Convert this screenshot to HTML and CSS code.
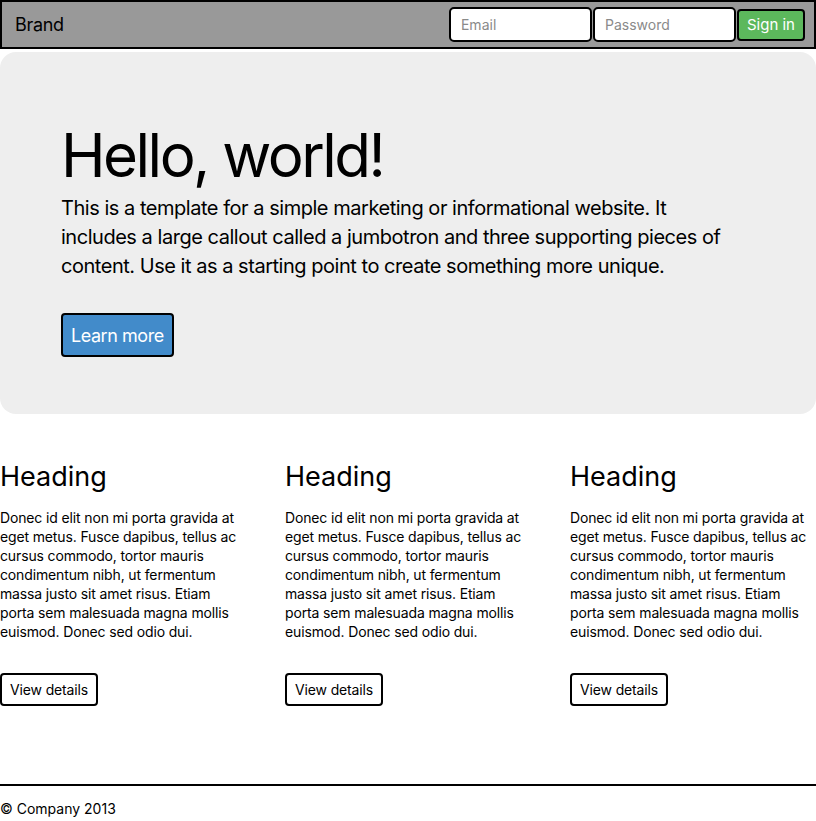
FILE: index.html
```html
<!DOCTYPE html>
<html lang="en">
<head>
<meta charset="utf-8">
<title>Jumbotron</title>
<link rel="stylesheet" href="styles.css">
</head>
<body>
<header class="navbar">
  <a class="brand" href="#">Brand</a>
  <form class="signin">
    <input class="field" type="text" placeholder="Email">
    <input class="field" type="password" placeholder="Password">
    <button class="btn-signin" type="button">Sign in</button>
  </form>
</header>
<section class="jumbotron">
  <h1 class="hero-title">Hello, world!</h1>
  <p class="hero-text">This is a template for a simple marketing or informational website. It includes a large callout called a jumbotron and three supporting pieces of content. Use it as a starting point to create something more unique.</p>
  <button class="btn-primary" type="button">Learn more</button>
</section>
<section class="columns">
  <div class="col">
    <h2 class="col-title">Heading</h2>
    <p class="col-text">Donec id elit non mi porta gravida at eget metus. Fusce dapibus, tellus ac cursus commodo, tortor mauris condimentum nibh, ut fermentum massa justo sit amet risus. Etiam porta sem malesuada magna mollis euismod. Donec sed odio dui.</p>
    <button class="btn-default" type="button">View details</button>
  </div>
  <div class="col">
    <h2 class="col-title">Heading</h2>
    <p class="col-text">Donec id elit non mi porta gravida at eget metus. Fusce dapibus, tellus ac cursus commodo, tortor mauris condimentum nibh, ut fermentum massa justo sit amet risus. Etiam porta sem malesuada magna mollis euismod. Donec sed odio dui.</p>
    <button class="btn-default" type="button">View details</button>
  </div>
  <div class="col">
    <h2 class="col-title">Heading</h2>
    <p class="col-text">Donec id elit non mi porta gravida at eget metus. Fusce dapibus, tellus ac cursus commodo, tortor mauris condimentum nibh, ut fermentum massa justo sit amet risus. Etiam porta sem malesuada magna mollis euismod. Donec sed odio dui.</p>
    <button class="btn-default" type="button">View details</button>
  </div>
</section>
<footer class="footer">
  <p class="footer-text">© Company 2013</p>
</footer>
</body>
</html>
```

FILE: styles.css
```css
* {
  box-sizing: border-box;
}

body {
  margin: 0;
  font-family: Inter, "Noto Sans", sans-serif;
  color: #000;
  background: #fff;
}

.navbar {
  height: 49px;
  border: 2px solid #000;
  background: #999;
  display: flex;
  align-items: center;
  justify-content: space-between;
  padding: 0 9px 0 13px;
}

.brand {
  font-size: 18px;
  letter-spacing: -0.3px;
  color: #000;
  text-decoration: none;
}

.signin {
  display: flex;
  align-items: center;
  gap: 1px;
}

.field {
  width: 143px;
  height: 35px;
  border: 2px solid #000;
  border-radius: 5px;
  background: #fff;
  padding: 0 10px;
  font-family: Inter, sans-serif;
  font-size: 14px;
  color: #000;
}

.field::placeholder {
  color: #8a8a8a;
}

.btn-signin {
  height: 32px;
  border: 2px solid #000;
  border-radius: 4px;
  background: #5cb85c;
  color: #fff;
  font-family: Inter, sans-serif;
  font-size: 15px;
  padding: 0 8px;
}

.jumbotron {
  margin-top: 3px;
  background: #eee;
  border-radius: 16px;
  padding: 70px 60px 57px 61px;
}

.hero-title {
  margin: 0;
  font-size: 60px;
  font-weight: 400;
  line-height: 1.1;
  letter-spacing: -2.5px;
}

.hero-text {
  margin: 6px 0 32px;
  max-width: 680px;
  font-size: 20px;
  line-height: 29px;
  letter-spacing: -0.47px;
}

.btn-primary {
  display: block;
  height: 44px;
  border: 2px solid #000;
  border-radius: 4px;
  background: #428bca;
  color: #fff;
  font-family: Inter, sans-serif;
  font-size: 18px;
  letter-spacing: -0.45px;
  padding: 0 8px;
}

.columns {
  display: grid;
  grid-template-columns: 285px 285px 1fr;
  margin-top: 48px;
}

.col {
  padding-right: 39px;
}

.col:last-child {
  padding-right: 0;
}

.col-title {
  margin: 0;
  font-size: 27px;
  font-weight: 400;
  line-height: 1.1;
}

.col-text {
  margin: 16px 0 32px;
  font-size: 14px;
  line-height: 19px;
  letter-spacing: -0.14px;
}

.btn-default {
  height: 33px;
  border: 2px solid #000;
  border-radius: 4px;
  background: #fff;
  color: #000;
  font-family: Inter, sans-serif;
  font-size: 14px;
  letter-spacing: -0.14px;
  padding: 0 8px;
}

.footer {
  margin-top: 78px;
  border-top: 2px solid #000;
  padding-top: 13px;
}

.footer-text {
  margin: 0;
  font-size: 14px;
  line-height: 19px;
}
```
